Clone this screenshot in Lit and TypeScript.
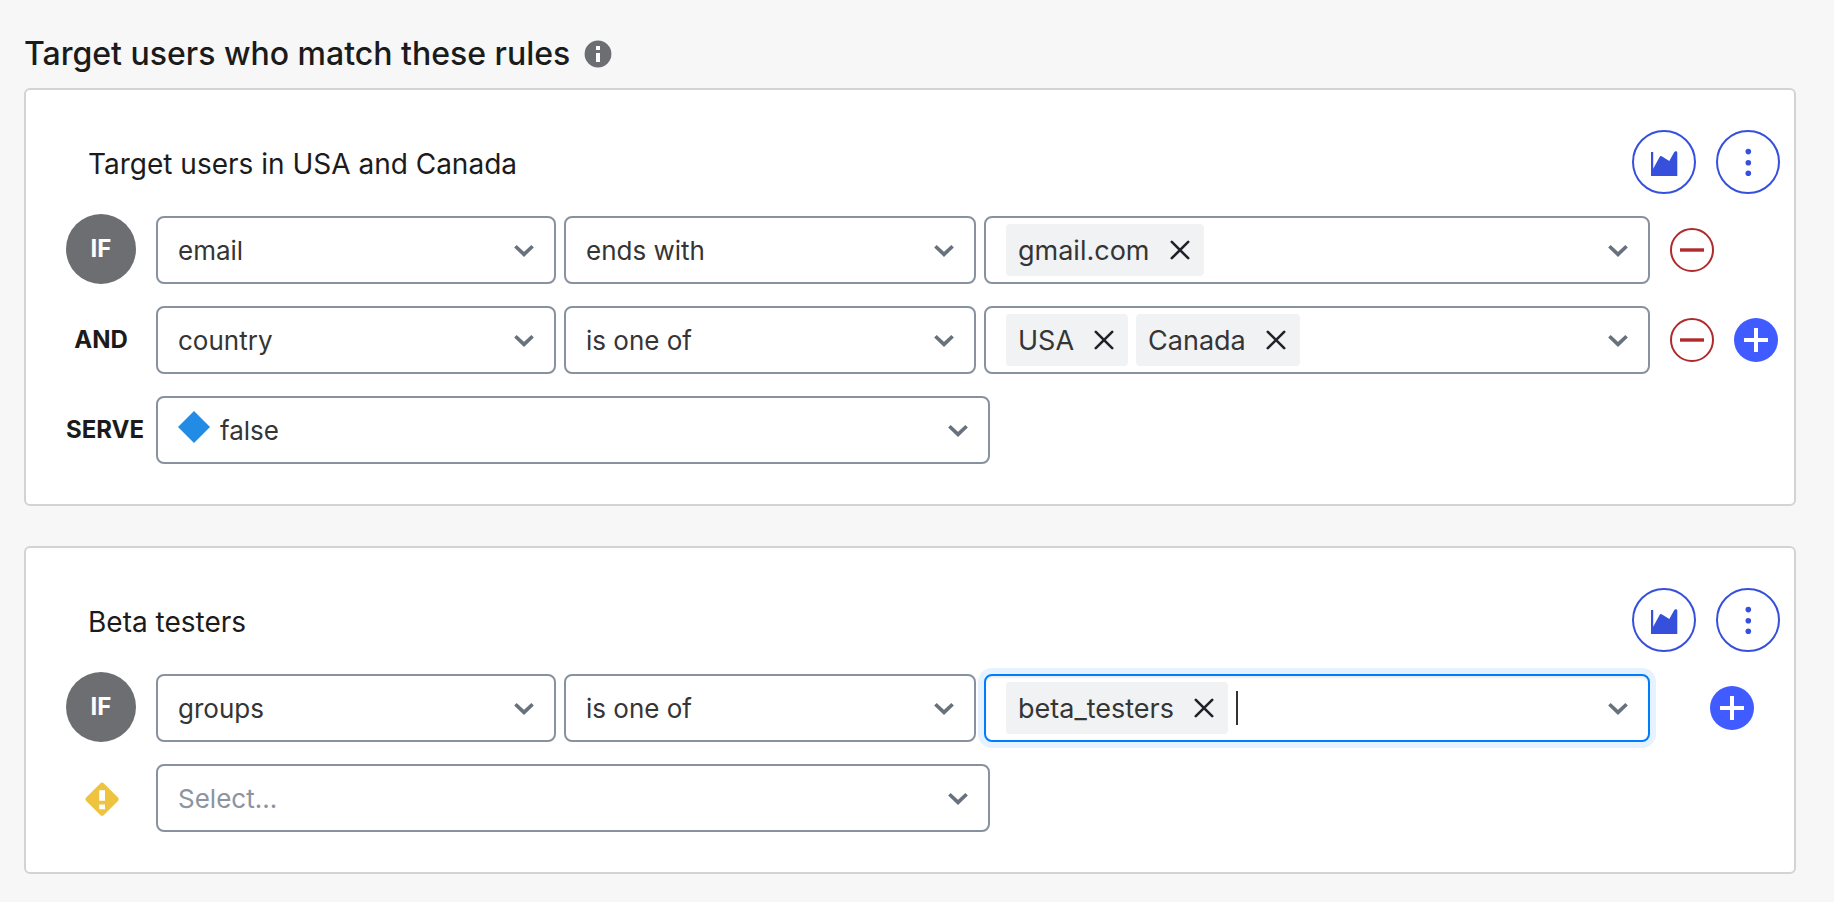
import { LitElement, html, css, svg, nothing } from "lit";
import { customElement, property } from "lit/decorators.js";

interface Clause {
  label: string;
  attribute: string;
  operator: string;
  values: string[];
  focused?: boolean;
  removable?: boolean;
  addable?: boolean;
}

interface Rule {
  name: string;
  clauses: Clause[];
  serve: string;
}

const RULES: Rule[] = [
  {
    name: "Target users in USA and Canada",
    clauses: [
      { label: "IF", attribute: "email", operator: "ends with", values: ["gmail.com"], removable: true },
      {
        label: "AND",
        attribute: "country",
        operator: "is one of",
        values: ["USA", "Canada"],
        removable: true,
        addable: true,
      },
    ],
    serve: "false",
  },
  {
    name: "Beta testers",
    clauses: [
      {
        label: "IF",
        attribute: "groups",
        operator: "is one of",
        values: ["beta_testers"],
        focused: true,
        addable: true,
      },
    ],
    serve: "",
  },
];

const ATTRIBUTES = ["email", "country", "groups"];
const OPERATORS = ["is one of", "ends with"];

const chevron = html`<svg class="chevron" width="20" height="14" viewBox="0 0 20 14" aria-hidden="true">
  <path d="M1.4 2.2 10 10.4l8.6-8.2" fill="none" stroke="#67727e" stroke-width="3.6" />
</svg>`;

const cross = html`<svg width="20" height="20" viewBox="0 0 20 20" aria-hidden="true">
  <path d="M1.8 1.8l16.4 16.4M18.2 1.8 1.8 18.2" fill="none" stroke="#1e2229" stroke-width="2.6" stroke-linecap="round" />
</svg>`;

const plusBar = svg`<path d="M22 10v24" stroke="#fff" stroke-width="4" />`;

@customElement("rule-card")
export class RuleCard extends LitElement {
  @property({ attribute: false }) rule!: Rule;

  static styles = css`
    :host {
      display: block;
      box-sizing: border-box;
      padding: 40px 14px 40px 40px;
      background: #fff;
      border: 2px solid #d3d3d3;
      border-radius: 6px;
    }
    *,
    *::before,
    *::after {
      box-sizing: border-box;
    }
    button,
    select,
    input {
      margin: 0;
      font: inherit;
      color: inherit;
      background: none;
      border: 0;
      padding: 0;
      outline: none;
    }
    button {
      display: flex;
      align-items: center;
      justify-content: center;
      cursor: pointer;
      flex: none;
    }
    .head {
      display: flex;
      align-items: center;
      gap: 20px;
      padding-left: 22px;
      margin-bottom: 22px;
    }
    .name {
      flex: 1;
      margin: 0;
      padding-top: 4px;
      font-size: 28px;
      line-height: 36px;
      font-weight: 400;
      color: #1b1b1c;
    }
    .round {
      width: 64px;
      height: 64px;
      border: 2px solid #3650db;
      border-radius: 50%;
    }
    .rows {
      display: flex;
      flex-direction: column;
      gap: 22px;
    }
    .row {
      display: flex;
      align-items: center;
      gap: 20px;
      height: 68px;
    }
    .label {
      display: flex;
      justify-content: center;
      width: 70px;
      flex: none;
      font-size: 24px;
      line-height: 32px;
      font-weight: 700;
      color: #1b1b1c;
      white-space: nowrap;
    }
    .serve-label {
      justify-content: flex-start;
    }
    .badge {
      align-items: center;
      align-self: flex-end;
      height: 70px;
      border-radius: 50%;
      background: #6d6e72;
      color: #fff;
    }
    .warning {
      padding: 2px 0 0 2px;
    }
    .fields {
      flex: 1;
      min-width: 0;
      display: grid;
      grid-template-columns: 400fr 412fr 666fr;
      gap: 8px;
    }
    .serve-fields {
      grid-template-columns: 834fr 652fr;
    }
    .field {
      display: grid;
      align-items: center;
      min-width: 0;
      height: 68px;
      border: 2px solid #88929e;
      border-radius: 8px;
      background: #fff;
      font-size: 26px;
      line-height: 36px;
      color: #353535;
    }
    .field > * {
      grid-area: 1 / 1;
    }
    .select {
      width: 100%;
      height: 64px;
      padding: 2px 20px 0;
      appearance: none;
      cursor: pointer;
    }
    .with-flag .select {
      padding-left: 62px;
    }
    .placeholder {
      color: #8b949f;
    }
    .chevron {
      justify-self: end;
      margin: 2px 20px 0 0;
      flex: none;
      pointer-events: none;
    }
    .flag {
      margin: 0 0 6px 20px;
      pointer-events: none;
    }
    .multi {
      display: flex;
      gap: 8px;
      padding-left: 20px;
    }
    .focused {
      border-color: #007dff;
      box-shadow: 0 0 0 6px #e6f2ff, inset 0 2px 2px #eeeeee;
    }
    .chip {
      display: flex;
      align-items: center;
      gap: 20px;
      height: 52px;
      padding: 0 14px 0 12px;
      border-radius: 4px;
      background: #f1f2f4;
      font-size: 27px;
      flex: none;
    }
    .chip-text {
      padding-top: 2px;
    }
    .entry {
      flex: 1;
      min-width: 0;
      height: 40px;
      caret-color: transparent;
    }
    .caret {
      width: 2px;
      height: 34px;
      background: #333;
    }
    .actions {
      display: flex;
      gap: 20px;
      width: 110px;
      flex: none;
    }
    .actions-solo {
      padding-left: 40px;
    }
    .dot {
      width: 44px;
      height: 44px;
    }
  `;

  private options(list: string[], selected: string) {
    return list.map((o) => html`<option ?selected=${o === selected}>${o}</option>`);
  }

  private clause(c: Clause) {
    return html`<div class="row">
      <div class="label ${c.label === "IF" ? "badge" : ""}">${c.label}</div>
      <div class="fields">
        <div class="field">
          <select class="select" aria-label="Attribute">
            ${this.options(ATTRIBUTES, c.attribute)}
          </select>
          ${chevron}
        </div>
        <div class="field">
          <select class="select" aria-label="Operator">
            ${this.options(OPERATORS, c.operator)}
          </select>
          ${chevron}
        </div>
        <div class="field multi ${c.focused ? "focused" : ""}">
          ${c.values.map(
            (v) => html`<span class="chip"
              ><span class="chip-text">${v}</span
              ><button type="button" aria-label="Remove ${v}">${cross}</button></span
            >`
          )}
          ${c.focused ? html`<span class="caret"></span>` : nothing}
          <input class="entry" type="text" aria-label="Values" />
          ${chevron}
        </div>
      </div>
      <div class="actions ${c.removable ? "" : "actions-solo"}">
        ${c.removable
          ? html`<button class="dot" type="button" aria-label="Remove clause">
              <svg width="44" height="44" viewBox="0 0 44 44" aria-hidden="true">
                <circle cx="22" cy="22" r="21" fill="#fff" stroke="#ae2a2c" stroke-width="2" />
                <path d="M10 22h24" stroke="#ae2a2c" stroke-width="3.4" />
              </svg>
            </button>`
          : nothing}
        ${c.addable
          ? html`<button class="dot" type="button" aria-label="Add clause">
              <svg width="44" height="44" viewBox="0 0 44 44" aria-hidden="true">
                <circle cx="22" cy="22" r="22" fill="#405bff" />
                <path d="M10 22h24" stroke="#fff" stroke-width="4" />
                ${plusBar}
              </svg>
            </button>`
          : nothing}
      </div>
    </div>`;
  }

  private serveRow(value: string) {
    return html`<div class="row">
      ${value
        ? html`<div class="label serve-label">SERVE</div>`
        : html`<div class="label warning">
            <svg width="36" height="36" viewBox="0 0 36 36" role="img" aria-label="Selection required">
              <path
                d="M16.3 2.4a2.6 2.6 0 0 1 3.6 0l14.1 14a2.6 2.6 0 0 1 0 3.6l-14.1 14a2.6 2.6 0 0 1-3.6 0L2.2 20a2.6 2.6 0 0 1 0-3.6z"
                fill="#eec340"
              />
              <path d="M15.2 9.2h5.8v10.6h-5.8zM15.2 23.6h5.8v4.6h-5.8z" fill="#fff" />
            </svg>
          </div>`}
      <div class="fields serve-fields">
        <div class="field ${value ? "with-flag" : ""}">
          <select class="select ${value ? "" : "placeholder"}" aria-label="Variation to serve">
            ${value
              ? this.options(["true", "false"], value)
              : html`<option selected>Select...</option><option>true</option><option>false</option>`}
          </select>
          ${value
            ? html`<svg class="flag" width="32" height="32" viewBox="0 0 32 32" aria-hidden="true">
                <path d="M16 0l16 16-16 16L0 16z" fill="#228be6" />
              </svg>`
            : nothing}
          ${chevron}
        </div>
      </div>
      <div class="actions"></div>
    </div>`;
  }

  render() {
    const { name, clauses, serve } = this.rule;
    return html`
      <div class="head">
        <h3 class="name">${name}</h3>
        <button class="round" type="button" aria-label="Insights">
          <svg width="28" height="28" viewBox="0 0 28 28" aria-hidden="true">
            <path
              d="M1 4h2.2v16.8L9.7 8.8q.7-1.3 2-.6l7.6 4.8 5-9q.8-1.2 2-.7 1 .4 1 1.5V28H1z"
              fill="#3650db"
            />
          </svg>
        </button>
        <button class="round" type="button" aria-label="More options">
          <svg width="28" height="28" viewBox="0 0 28 28" aria-hidden="true">
            <g fill="#3650db">
              <circle cx="14.3" cy="3.6" r="2.8" />
              <circle cx="14.3" cy="14.8" r="2.8" />
              <circle cx="14.3" cy="25.2" r="2.8" />
            </g>
          </svg>
        </button>
      </div>
      <div class="rows">${clauses.map((c) => this.clause(c))} ${this.serveRow(serve)}</div>
    `;
  }
}

@customElement("app-root")
export class AppRoot extends LitElement {
  static styles = css`
    :host {
      display: block;
      box-sizing: border-box;
      min-height: 100vh;
      padding: 34px 38px 28px 24px;
      background: #f7f7f7;
      font-family: Inter, "Liberation Sans", sans-serif;
    }
    .title {
      display: flex;
      align-items: center;
      gap: 14px;
      margin: 0 0 14px;
      font-size: 32px;
      line-height: 40px;
      font-weight: 500;
      color: #1b1b1c;
    }
    .cards {
      display: flex;
      flex-direction: column;
      gap: 40px;
    }
  `;

  render() {
    return html`
      <h2 class="title">
        Target users who match these rules
        <svg width="28" height="28" viewBox="0 0 28 28" role="img" aria-label="More information">
          <circle cx="14" cy="14" r="13.4" fill="#6d6e72" />
          <path d="M12 6h4v4h-4zM12 13h4v9h-4z" fill="#fff" />
        </svg>
      </h2>
      <div class="cards">${RULES.map((r) => html`<rule-card .rule=${r}></rule-card>`)}</div>
    `;
  }
}
